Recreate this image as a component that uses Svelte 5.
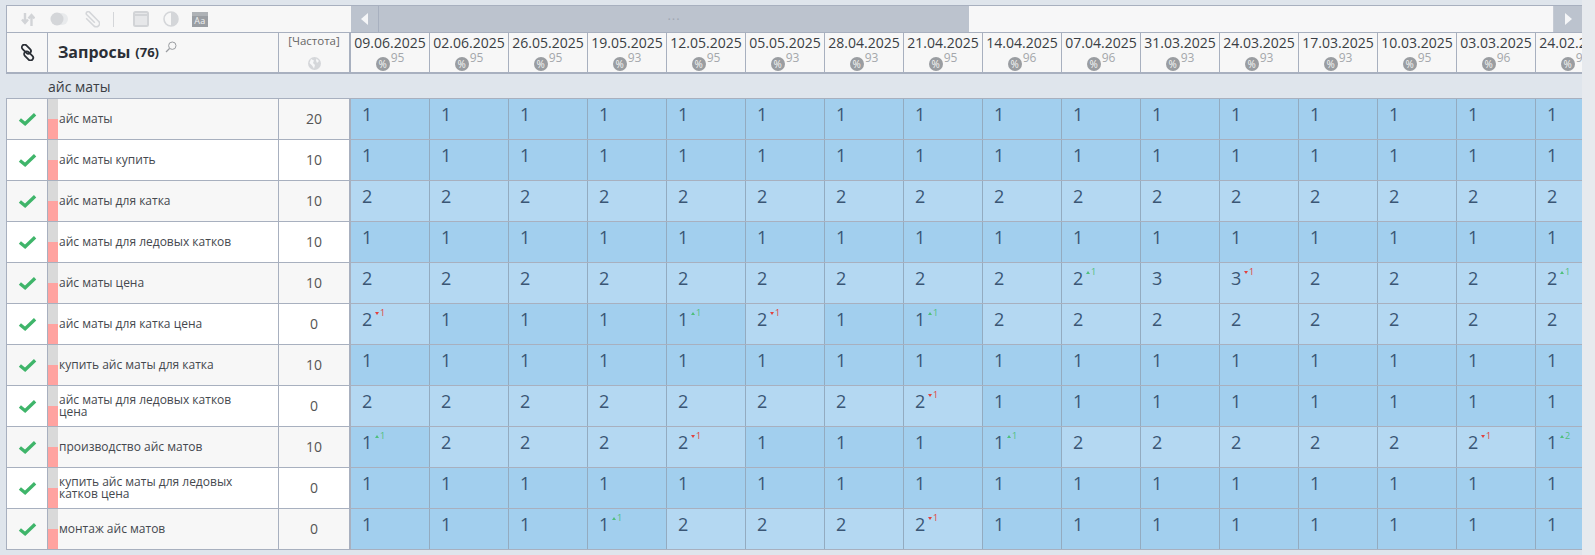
<script>
    const dates = ['09.06.2025','02.06.2025','26.05.2025','19.05.2025','12.05.2025','05.05.2025','28.04.2025','21.04.2025','14.04.2025','07.04.2025','31.03.2025','24.03.2025','17.03.2025','10.03.2025','03.03.2025','24.02.2025'];
    const vis = [95,95,95,93,95,93,93,95,96,96,93,93,93,95,96,96];

    const rows = [
        { name: 'айс маты', freq: 20, cells: Array(16).fill(1) },
        { name: 'айс маты купить', freq: 10, cells: Array(16).fill(1) },
        { name: 'айс маты для катка', freq: 10, cells: Array(16).fill(2) },
        { name: 'айс маты для ледовых катков', freq: 10, cells: Array(16).fill(1) },
        { name: 'айс маты цена', freq: 10, cells: [2,2,2,2,2,2,2,2,2,2,3,3,2,2,2,2], deltas: { 9: 1, 11: -1, 15: 1 } },
        { name: 'айс маты для катка цена', freq: 0, cells: [2,1,1,1,1,2,1,1,2,2,2,2,2,2,2,2], deltas: { 0: -1, 4: 1, 5: -1, 7: 1 } },
        { name: 'купить айс маты для катка', freq: 10, cells: Array(16).fill(1) },
        { name: 'айс маты для ледовых катков цена', freq: 0, cells: [2,2,2,2,2,2,2,2,1,1,1,1,1,1,1,1], deltas: { 7: -1 } },
        { name: 'производство айс матов', freq: 10, cells: [1,2,2,2,2,1,1,1,1,2,2,2,2,2,2,1], deltas: { 0: 1, 4: -1, 8: 1, 14: -1, 15: 2 } },
        { name: 'купить айс маты для ледовых катков цена', freq: 0, cells: Array(16).fill(1) },
        { name: 'монтаж айс матов', freq: 0, cells: [1,1,1,1,2,2,2,2,1,1,1,1,1,1,1,1], deltas: { 3: 1, 7: -1 } }
    ];
</script>

<div class="page">
    <div class="table">
        <div class="toolbar">
            <div class="tools">
                <svg class="tool" width="14" height="13" viewBox="0 0 14 13"><path d="M4 0v9M1 6.500 4 10l3-3.500M10.500 13V3M7.500 5.500 10.500 2l3 3.500" fill="none" stroke="#d2d4d7" stroke-width="2.400"/></svg>
                <svg class="tool toggle" width="18" height="14" viewBox="0 0 18 14"><rect x="1" y="1" width="17" height="12" rx="6" fill="#e8eaec"/><circle cx="7" cy="7" r="6.500" fill="#d4d6d9"/></svg>
                <svg class="tool clip" width="17" height="17" viewBox="0 0 18 18"><path d="M4 12H15.500a3.500 3.500 0 0 0 0-7H2a2 2 0 0 0 0 4H14" transform="rotate(45 9 9)" fill="none" stroke="#d4d6d9" stroke-width="1.600"/></svg>
                <span class="sep"></span>
                <svg class="tool window" width="16" height="16" viewBox="0 0 16 16"><rect x="1" y="1" width="14" height="14" rx="1.500" fill="#e6e7e9" stroke="#d2d4d7" stroke-width="2"/><rect x="1" y="3" width="14" height="2" fill="#d2d4d7"/></svg>
                <svg class="tool contrast" width="16" height="16" viewBox="0 0 16 16"><circle cx="8" cy="8" r="7" fill="none" stroke="#d4d6d9" stroke-width="1.600"/><path d="M8 1a7 7 0 0 1 0 14z" fill="#d4d6d9"/></svg>
                <span class="aa">Aa</span>
            </div>
            <div class="scroller">
                <div class="arrow"><span class="tri left"></span></div>
                <div class="thumb">···</div>
                <div class="track"></div>
                <div class="arrow end"><span class="tri right"></span></div>
            </div>
        </div>

        <div class="header">
            <div class="c-link">
                <svg width="17" height="17" viewBox="0 0 16 16"><g transform="rotate(45 8 8)" fill="none" stroke="#2b2f36" stroke-width="1.700"><rect x="0" y="4" width="10" height="5" rx="2.500"/><rect x="6" y="7" width="10" height="5" rx="2.500"/></g></svg>
            </div>
            <div class="c-name head-name">
                <b>Запросы</b> <b class="count">(76)</b>
                <svg class="search" width="12" height="12" viewBox="0 0 12 12"><circle cx="7.300" cy="4.700" r="3.700" fill="none" stroke="#9a9da1" stroke-width="1"/><path d="M4.500 7.500 1 11" stroke="#9a9da1" stroke-width="1.300"/></svg>
            </div>
            <div class="c-freq head-freq">
                <span>[Частота]</span>
                <svg width="13" height="13" viewBox="0 0 13 13"><circle cx="6.500" cy="6.500" r="6.500" fill="#d5d7da"/><path d="M3 2 6 3.500 5 6 7 8 6 11.500 4 8.500 1.500 6zM8.500 1.500 11 4 9 6 8 3.500z" fill="#f6f7f8"/></svg>
            </div>
            <div class="dates">
                {#each dates as d, i}
                    <div class="date">
                        <span class="d">{d}</span>
                        <span class="vis">
                            <span class="pct">%</span><sup>{vis[i]}</sup>
                        </span>
                    </div>
                {/each}
            </div>
        </div>

        <div class="group">айс маты</div>

        {#each rows as r, ri}
            <div class="row" class:odd={ri % 2 === 0}>
                <div class="c-link">
                    <svg width="19" height="14" viewBox="0 0 20 14"><path d="M2 7.500 7.500 12 18 2" fill="none" stroke="#3fb56a" stroke-width="3.500"/></svg>
                </div>
                <div class="c-name">
                    <div class="bar"><span></span></div>
                    <div class="name">{r.name}</div>
                </div>
                <div class="c-freq value">{r.freq}</div>
                <div class="cells">
                    {#each r.cells as v, i}
                        <div class="cell" class:top1={v === 1} class:top2={v !== 1}>
                            <span class="pos">{v}</span>
                            {#if r.deltas && r.deltas[i]}
                                <span class="delta" class:up={r.deltas[i] > 0}>
                                    <i></i>{Math.abs(r.deltas[i])}
                                </span>
                            {/if}
                        </div>
                    {/each}
                </div>
            </div>
        {/each}
    </div>
</div>

<style>
    :global(body) {
        margin: 0;
        background: #e7eaee;
    }
    .page {
        width: 1595px;
        height: 555px;
        overflow: hidden;
        font-family: "Open Sans", sans-serif;
        color: #2f3338;
    }
    .table {
        width: 1582px;
        height: 555px;
        box-sizing: border-box;
        padding: 5px 0 0 6px;
        background: #dfe5ec;
        overflow: hidden;
    }
    .toolbar {
        display: flex;
        height: 27px;
        border-top: 1px solid #a8b0bf;
        box-sizing: border-box;
    }
    .tools {
        width: 345px;
        flex: none;
        display: flex;
        align-items: center;
        background: #f7f7f7;
        border-left: 1px solid #a8b0bf;
        box-sizing: border-box;
        padding-left: 14px;
    }
    .tool { flex: none; }
    .toggle { margin-left: 15px; }
    .clip { margin-left: 15px; }
    .sep {
        width: 1px;
        height: 15px;
        background: #d4d6d9;
        margin-left: 13px;
    }
    .window { margin-left: 19px; }
    .contrast { margin-left: 14px; }
    .aa {
        width: 16px;
        height: 15px;
        margin-left: 13px;
        background: linear-gradient(#aeb2b6 0 4px, #9a9ea3 4px);
        color: #f0f1f2;
        font-size: 9px;
        line-height: 17px;
        text-align: center;
        letter-spacing: 0.5px;
    }
    .scroller {
        flex: 1;
        display: flex;
        min-width: 0;
    }
    .arrow {
        width: 28px;
        flex: none;
        background: #bcc3ce;
        border-right: 1px solid #a8b0bf;
        box-sizing: border-box;
        display: flex;
        align-items: center;
        justify-content: center;
    }
    .arrow.end {
        border-right: 0;
        border-left: 1px solid #c6cbd4;
        width: 29px;
    }
    .tri {
        width: 0;
        height: 0;
        border-top: 6px solid transparent;
        border-bottom: 6px solid transparent;
    }
    .tri.left { border-right: 7px solid #f5f6f8; }
    .tri.right { border-left: 7px solid #f5f6f8; }
    .thumb {
        width: 590px;
        flex: none;
        background: #bcc3ce;
        color: #a0a7b2;
        font-size: 13px;
        line-height: 26px;
        text-align: center;
        letter-spacing: 1px;
    }
    .track {
        flex: 1;
        background: #f7f7f8;
    }
    .header {
        display: flex;
        height: 39px;
        border-top: 1px solid #a8b0bf;
        border-bottom: 2px solid #a8b0bf;
        box-sizing: content-box;
        background: #f7f7f7;
    }
    .c-link {
        width: 42px;
        flex: none;
        box-sizing: border-box;
        border-left: 1px solid #a8b0bf;
        border-right: 1px solid #a8b0bf;
        display: flex;
        align-items: center;
        justify-content: center;
    }
    .c-name {
        width: 231px;
        flex: none;
        box-sizing: border-box;
        border-right: 1px solid #a8b0bf;
        display: flex;
    }
    .head-name {
        align-items: flex-start;
        padding: 8px 0 0 10px;
        font-size: 16px;
        line-height: 22px;
        color: #2b2f36;
    }
    .head-name .count {
        font-size: 13px;
        margin-left: 5px;
    }
    .search { margin: 0 0 0 6px; }
    .c-freq {
        width: 72px;
        flex: none;
        box-sizing: border-box;
        border-right: 2px solid #a8b0bf;
        display: flex;
        align-items: center;
        justify-content: center;
        font-size: 14px;
        color: #555;
    }
    .value { padding-bottom: 1px; }
    .head-freq {
        flex-direction: column;
        justify-content: flex-start;
        font-size: 11.500px;
        line-height: 14px;
        padding-top: 1px;
        color: #666;
        gap: 9px;
    }
    .dates, .cells {
        display: flex;
        flex: 1;
        min-width: 0;
        overflow: hidden;
    }
    .date {
        width: 79px;
        flex: none;
        box-sizing: border-box;
        border-right: 1px solid #a8b0bf;
        display: flex;
        flex-direction: column;
        align-items: center;
    }
    .d {
        font-size: 14px;
        line-height: 20px;
        color: #3a3e44;
        white-space: nowrap;
    }
    .vis {
        display: flex;
        align-items: flex-start;
        color: #a4a7ab;
        font-size: 12px;
        line-height: 13px;
        margin-top: -2px;
    }
    .pct {
        width: 14px;
        height: 14px;
        border-radius: 50%;
        background: #9a9da1;
        color: #f5f5f5;
        font-size: 10px;
        line-height: 14px;
        text-align: center;
        margin-top: 6px;
    }
    sup {
        font-size: inherit;
        line-height: 13px;
        margin-left: 1px;
        vertical-align: baseline;
    }
    .group {
        height: 24px;
        box-sizing: border-box;
        padding: 1px 0 0 42px;
        font-size: 14px;
        line-height: 24px;
        color: #3a3e44;
    }
    .row {
        display: flex;
        height: 41px;
        box-sizing: border-box;
        border-top: 1px solid #a8b0bf;
        background: #fff;
    }
    .row:last-child {
        height: 42px;
        border-bottom: 1px solid #a8b0bf;
    }
    .row.odd { background: #f7f7f7; }
    .bar {
        width: 10px;
        flex: none;
        background: #d9d9d9;
        display: flex;
        align-items: flex-end;
    }
    .bar span {
        display: block;
        width: 100%;
        height: 50%;
        background: #ffa3a0;
    }
    .name {
        align-self: center;
        padding: 0 25px 0 1px;
        font-size: 12px;
        line-height: 12px;
        color: #44484e;
    }
    .cell {
        width: 79px;
        flex: none;
        box-sizing: border-box;
        border-top: 1px solid #93abc0;
        border-right: 1px solid #93abc0;
        margin-top: -1px;
        position: relative;
        padding: 2px 0 0 11px;
        color: #3a5675;
        font-size: 18px;
        line-height: 26px;
    }
    .top1 { background: #a2cfee; }
    .top2 { background: #b4d8f2; }
    .delta {
        position: absolute;
        top: 4px;
        left: 24px;
        font-size: 9px;
        line-height: 10px;
        color: #e2403e;
        display: flex;
        align-items: center;
        gap: 1px;
    }
    .delta i {
        width: 0;
        height: 0;
        border-left: 2.500px solid transparent;
        border-right: 2.500px solid transparent;
        border-top: 3px solid currentColor;
    }
    .delta.up { color: #4fbf7c; }
    .delta.up i {
        border-top: 0;
        border-bottom: 3px solid currentColor;
    }
</style>
